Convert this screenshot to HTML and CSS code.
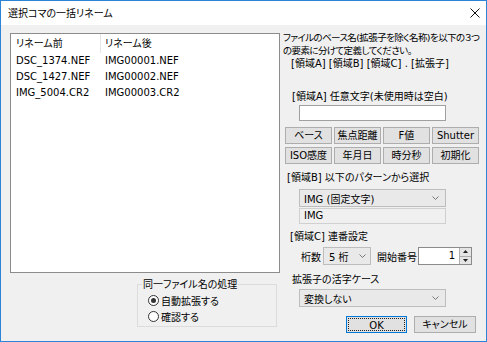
FILE: index.html
```html
<!DOCTYPE html>
<html lang="ja">
<head>
  <meta charset="UTF-8">
  <title>選択コマの一括リネーム</title>
  <link rel="stylesheet" href="styles.css">
</head>
<body>
  <div class="window">
    <div class="titlebar">
      <span class="title">選択コマの一括リネーム</span>
      <svg class="close" width="10" height="10" viewBox="0 0 10 10">
        <path d="M0.5 0.5 L9.5 9.5 M9.5 0.5 L0.5 9.5" stroke="#111" stroke-width="1" fill="none"/>
      </svg>
    </div>
    <div class="client">
      <div class="left">
        <div class="listbox">
          <div class="list-row list-head"><span class="c1">リネーム前</span><span class="c2">リネーム後</span></div>
          <div class="list-row"><span class="c1">DSC_1374.NEF</span><span class="c2">IMG00001.NEF</span></div>
          <div class="list-row"><span class="c1">DSC_1427.NEF</span><span class="c2">IMG00002.NEF</span></div>
          <div class="list-row"><span class="c1">IMG_5004.CR2</span><span class="c2">IMG00003.CR2</span></div>
        </div>
        <fieldset class="group">
          <legend>同一ファイル名の処理</legend>
          <label class="radio"><span class="dot checked"></span>自動拡張する</label>
          <label class="radio"><span class="dot"></span>確認する</label>
        </fieldset>
      </div>

      <div class="right">
        <p class="desc">ファイルのベース名(拡張子を除く名称)を以下の３つ<br>の要素に分けて定義してください。</p>
        <p class="areas">[領域A] [領域B] [領域C] . [拡張子]</p>

        <p class="label lab-a">[領域A] 任意文字(未使用時は空白)</p>
        <div class="textbox"></div>
        <div class="btn-grid">
          <button class="btn">ベース</button>
          <button class="btn">焦点距離</button>
          <button class="btn">F値</button>
          <button class="btn">Shutter</button>
          <button class="btn">ISO感度</button>
          <button class="btn">年月日</button>
          <button class="btn">時分秒</button>
          <button class="btn">初期化</button>
        </div>

        <p class="label lab-b">[領域B] 以下のパターンから選択</p>
        <div class="combo wide">
          <span>IMG (固定文字)</span>
          <svg class="chev" width="7" height="4" viewBox="0 0 7 4"><path d="M0.5 0.5 L3.5 3.5 L6.5 0.5" stroke="#777" fill="none"/></svg>
        </div>
        <div class="readonly">IMG</div>

        <p class="label lab-c">[領域C] 連番設定</p>
        <div class="seq-row">
          <span class="seq-label">桁数</span>
          <div class="combo small">
            <span>5 桁</span>
            <svg class="chev" width="7" height="4" viewBox="0 0 7 4"><path d="M0.5 0.5 L3.5 3.5 L6.5 0.5" stroke="#777" fill="none"/></svg>
          </div>
          <span class="seq-label start">開始番号</span>
          <div class="spinner">
            <div class="spin-value">1</div>
            <div class="spin-btns">
              <div class="spin-up"><svg width="5" height="3" viewBox="0 0 5 3"><path d="M0 3 L2.5 0 L5 3 Z" fill="#222"/></svg></div>
              <div class="spin-down"><svg width="5" height="3" viewBox="0 0 5 3"><path d="M0 0 L2.5 3 L5 0 Z" fill="#222"/></svg></div>
            </div>
          </div>
        </div>

        <p class="label lab-ext">拡張子の活字ケース</p>
        <div class="combo wide case">
          <span>変換しない</span>
          <svg class="chev" width="7" height="4" viewBox="0 0 7 4"><path d="M0.5 0.5 L3.5 3.5 L6.5 0.5" stroke="#777" fill="none"/></svg>
        </div>

        <div class="actions">
          <button class="btn default"><span class="focus">OK</span></button>
          <button class="btn cancel">キャンセル</button>
        </div>
      </div>
    </div>
  </div>
</body>
</html>
```

FILE: styles.css
```css
* {
  box-sizing: border-box;
}

body {
  margin: 0;
  background: #fff;
  font-family: "DejaVu Sans", "Noto Sans CJK JP", sans-serif;
  font-size: 10px;
  color: #000;
  font-feature-settings: "palt";
}

p {
  margin: 0;
}

.window {
  width: 487px;
  height: 342px;
  border: 1px solid #2b84d6;
  background: #f0f0f0;
  display: flex;
  flex-direction: column;
}

.titlebar {
  height: 24px;
  background: #fff;
  display: flex;
  align-items: center;
  justify-content: space-between;
  padding: 0 6px 0 7px;
}

.title {
  font-size: 10px;
  line-height: 13px;
}

/* main area */
.client {
  flex: 1;
  display: flex;
  padding: 6px 0 0 9px;
}

.left {
  width: 270px;
  margin-top: 2px;
}

.listbox {
  height: 240px;
  background: #fff;
  border: 1px solid #8c8c8c;
}

.list-row {
  display: flex;
  height: 16px;
  line-height: 16px;
}

.list-head {
  height: 19px;
  line-height: 19px;
}

.c1 {
  width: 89px;
  padding-left: 5px;
  white-space: nowrap;
}

.c2 {
  padding-left: 5px;
  white-space: nowrap;
}

.list-head .c1 {
  border-right: 1px solid #e5e5e5;
  width: 90px;
}

.list-head .c2 {
  padding-left: 4px;
}

.group {
  margin: 5px 0 0 127px;
  width: 140px;
  height: 49px;
  border: 1px solid #dcdcdc;
  padding: 0 0 0 4px;
}

.group legend {
  padding: 0 1px;
  line-height: 13px;
}

.radio {
  display: flex;
  align-items: center;
  height: 16px;
  margin-left: 6px;
}

.radio:first-of-type {
  margin-top: 1px;
}

.dot {
  width: 11px;
  height: 11px;
  border: 1px solid #333;
  border-radius: 50%;
  background: #fff;
  margin-right: 2px;
  display: flex;
  align-items: center;
  justify-content: center;
}

.dot.checked::after {
  content: "";
  width: 5px;
  height: 5px;
  border-radius: 50%;
  background: #333;
}

/* right side */
.right {
  width: 200px;
  margin-left: 3px;
}

.desc,
.areas,
.label {
  line-height: 13px;
  white-space: nowrap;
}

.desc {
  font-size: 9.5px;
  letter-spacing: -0.6px;
}

.areas {
  margin-left: 8px;
}

.lab-a {
  margin: 20px 0 0 9px;
}

.textbox {
  margin: 2px 0 0 16px;
  width: 147px;
  height: 16px;
  background: #fff;
  border: 1px solid #a0a0a0;
}

.btn-grid {
  margin: 6px 0 0 2px;
  display: grid;
  grid-template-columns: repeat(4, 47px);
  grid-auto-rows: 17px;
  column-gap: 2px;
  row-gap: 3px;
}

.btn {
  font: inherit;
  font-feature-settings: "palt";
  background: #e1e1e1;
  border: 1px solid #adadad;
  padding: 0;
  color: #000;
  line-height: 15px;
  white-space: nowrap;
}

.lab-b {
  margin: 7px 0 0 4px;
}

.combo {
  height: 18px;
  background: #e9e9e9;
  border: 1px solid #bdbdbd;
  display: flex;
  align-items: center;
  justify-content: space-between;
  padding: 0 6px 0 4px;
}

.combo.wide {
  margin: 5px 0 0 16px;
  width: 147px;
}

.chev {
  display: block;
}

.readonly {
  margin: 1px 0 0 16px;
  width: 147px;
  height: 16px;
  line-height: 14px;
  background: #f0f0f0;
  border: 1px solid #d0d0d0;
  padding-left: 4px;
}

.lab-c {
  margin: 6px 0 0 7px;
}

.seq-row {
  margin: 4px 0 0 18px;
  display: flex;
  align-items: center;
  height: 18px;
}

.seq-label {
  white-space: nowrap;
}

.combo.small {
  margin-left: 2px;
  width: 48px;
  padding: 0 4px 0 5px;
}

.seq-label.start {
  margin-left: 6px;
}

.spinner {
  margin-left: 1px;
  width: 54px;
  height: 18px;
  display: flex;
  background: #fff;
  border: 1px solid #8a8a8a;
}

.spin-value {
  flex: 1;
  text-align: right;
  padding-right: 4px;
  line-height: 16px;
}

.spin-btns {
  width: 12px;
  display: flex;
  flex-direction: column;
  border-left: 1px solid #adadad;
}

.spin-up,
.spin-down {
  flex: 1;
  background: #e5e5e5;
  display: flex;
  align-items: center;
  justify-content: center;
}

.spin-up {
  border-bottom: 1px solid #adadad;
}

.lab-ext {
  margin: 8px 0 0 9px;
}

.combo.case {
  margin-top: 3px;
}

.actions {
  margin: 9px 0 0 63px;
  display: flex;
  gap: 7px;
}

.actions .btn {
  height: 17px;
  width: 61px;
}

.actions .cancel {
  width: 62px;
}

.btn.default {
  border: 1px solid #0078d7;
  padding: 1px;
}

.focus {
  display: block;
  height: 13px;
  line-height: 13px;
  border: 1px dotted #222;
}
```
